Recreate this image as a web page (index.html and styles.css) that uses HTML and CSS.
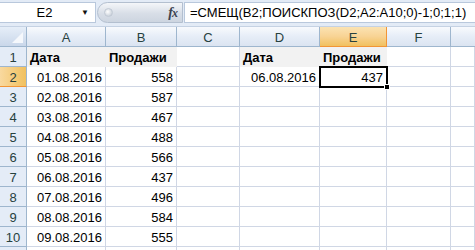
FILE: index.html
```html
<!DOCTYPE html>
<html lang="ru">
<head>
    <meta charset="UTF-8">
    <title>Книга1</title>
    <link rel="stylesheet" href="styles.css">
</head>
<body>
    <div class="formula-bar">
        <div class="name-box">
            <span class="cell-ref">E2</span>
            <span class="drop">&#9660;</span>
        </div>
        <div class="fx-box">
            <span class="knob"></span>
            <span class="fx"><i>f</i><i>x</i></span>
        </div>
        <div class="formula">=СМЕЩ(B2;ПОИСКПОЗ(D2;A2:A10;0)-1;0;1;1)</div>
    </div>

    <div class="sheet">
        <div class="corner"></div>
        <div class="col-head">A</div>
        <div class="col-head">B</div>
        <div class="col-head">C</div>
        <div class="col-head">D</div>
        <div class="col-head active">E</div>
        <div class="col-head">F</div>
        <div class="col-head last"></div>

        <div class="row-head">1</div>
        <div class="cell title">Дата</div>
        <div class="cell title">Продажи</div>
        <div class="cell"></div>
        <div class="cell title">Дата</div>
        <div class="cell title">Продажи</div>
        <div class="cell"></div>
        <div class="cell"></div>

        <div class="row-head active">2</div>
        <div class="cell num">01.08.2016</div>
        <div class="cell num">558</div>
        <div class="cell"></div>
        <div class="cell num">06.08.2016</div>
        <div class="cell num selected">437<span class="handle"></span></div>
        <div class="cell"></div>
        <div class="cell"></div>

        <div class="row-head">3</div>
        <div class="cell num">02.08.2016</div>
        <div class="cell num">587</div>
        <div class="cell"></div><div class="cell"></div><div class="cell"></div><div class="cell"></div><div class="cell"></div>

        <div class="row-head">4</div>
        <div class="cell num">03.08.2016</div>
        <div class="cell num">467</div>
        <div class="cell"></div><div class="cell"></div><div class="cell"></div><div class="cell"></div><div class="cell"></div>

        <div class="row-head">5</div>
        <div class="cell num">04.08.2016</div>
        <div class="cell num">488</div>
        <div class="cell"></div><div class="cell"></div><div class="cell"></div><div class="cell"></div><div class="cell"></div>

        <div class="row-head">6</div>
        <div class="cell num">05.08.2016</div>
        <div class="cell num">566</div>
        <div class="cell"></div><div class="cell"></div><div class="cell"></div><div class="cell"></div><div class="cell"></div>

        <div class="row-head">7</div>
        <div class="cell num">06.08.2016</div>
        <div class="cell num">437</div>
        <div class="cell"></div><div class="cell"></div><div class="cell"></div><div class="cell"></div><div class="cell"></div>

        <div class="row-head">8</div>
        <div class="cell num">07.08.2016</div>
        <div class="cell num">496</div>
        <div class="cell"></div><div class="cell"></div><div class="cell"></div><div class="cell"></div><div class="cell"></div>

        <div class="row-head">9</div>
        <div class="cell num">08.08.2016</div>
        <div class="cell num">584</div>
        <div class="cell"></div><div class="cell"></div><div class="cell"></div><div class="cell"></div><div class="cell"></div>

        <div class="row-head">10</div>
        <div class="cell num">09.08.2016</div>
        <div class="cell num">555</div>
        <div class="cell"></div><div class="cell"></div><div class="cell"></div><div class="cell"></div><div class="cell"></div>

        <div class="row-head"></div>
        <div class="cell"></div><div class="cell"></div><div class="cell"></div><div class="cell"></div><div class="cell"></div><div class="cell"></div><div class="cell"></div>
    </div>
</body>
</html>
```

FILE: styles.css
```css
* { box-sizing: border-box; }
body {
    margin: 0;
    width: 475px;
    height: 250px;
    overflow: hidden;
    background: #fff;
    font-family: 'Liberation Sans', Arial, sans-serif;
    font-size: 13px;
    color: #000;
}

/* formula bar */
.formula-bar {
    display: flex;
    align-items: stretch;
    height: 27px;
    padding: 2px 0 3px 0;
    background: #e3ebf6;
    border-bottom: 1px solid #c5d2e3;
}
.name-box {
    width: 96px;
    display: flex;
    align-items: center;
    background: #fff;
    border: 1px solid #b9c8dc;
    border-left: none;
}
.cell-ref {
    flex: 1;
    text-align: center;
    padding-left: 8px;
    font-size: 13px;
}
.drop {
    font-size: 8px;
    width: 14px;
    color: #111;
}
.fx-box {
    width: 86px;
    margin: 0 1px 0 1px;
    display: flex;
    align-items: center;
    justify-content: space-between;
    padding: 0 5px 0 6px;
    border-radius: 11px 0 0 11px;
    background: linear-gradient(#f4f6f9, #d8dee7 55%, #cdd5e0);
    border: 1px solid #b3bfcf;
}
.knob {
    width: 9px;
    height: 9px;
    border-radius: 50%;
    background: radial-gradient(circle at 40% 40%, #ffffff, #b8c2ce);
    border: 1px solid #c2cad5;
}
.fx {
    font-family: 'Liberation Serif', 'Times New Roman', serif;
    font-weight: bold;
    font-size: 14px;
    color: #3b4350;
    letter-spacing: -1px;
}
.fx i:last-child { font-size: 12px; }
.formula {
    flex: 1;
    background: #fff;
    border: 1px solid #b9c8dc;
    border-right: none;
    padding: 2px 0 0 5px;
    font-size: 13px;
    white-space: nowrap;
    overflow: hidden;
}

/* worksheet grid */
.sheet {
    display: grid;
    grid-template-columns: 27px 79px 71px 63px 80px 67px 64px 1fr;
    grid-template-rows: 20px;
    grid-auto-rows: 20px;
    height: 223px;
    overflow: hidden;
}
.corner {
    position: relative;
    background: linear-gradient(#e6eef8, #c9d7ea);
    border-right: 1px solid #9eb6ce;
    border-bottom: 1px solid #9eb6ce;
}
.corner::after {
    content: "";
    position: absolute;
    right: 3px;
    bottom: 3px;
    border-left: 11px solid transparent;
    border-bottom: 11px solid #f5f8fc;
}
.col-head {
    display: flex;
    align-items: center;
    justify-content: center;
    background: linear-gradient(#f8fafd, #e6edf7 50%, #dbe4f1);
    border-right: 1px solid #9eb6ce;
    border-bottom: 1px solid #9eb6ce;
    color: #27413e;
    font-size: 13px;
    padding-top: 1px;
}
.col-head.active {
    background: linear-gradient(#fbe3b3, #f8d394 50%, #f1c15f);
    border-right-color: #f29536;
    border-bottom-color: #f29536;
}
.col-head.last { border-right: none; }
.row-head {
    display: flex;
    align-items: center;
    justify-content: center;
    background: #e4ecf7;
    border-right: 1px solid #9eb6ce;
    border-bottom: 1px solid #9eb6ce;
    color: #27413e;
    padding-top: 1px;
}
.row-head.active {
    background: linear-gradient(90deg, #f9d99f, #f1c15f);
    border-bottom-color: #f29536;
}
.cell {
    position: relative;
    border-right: 1px solid #d0d7e5;
    border-bottom: 1px solid #d0d7e5;
    padding: 2px 3px 0 3px;
    line-height: 17px;
    white-space: nowrap;
}
.cell.title {
    font-weight: bold;
    background: #f2f2f2;
    border-right-color: #f2f2f2;
    border-bottom-color: #f2f2f2;
}
.cell.num { text-align: right; }
.cell.selected {
    outline: 2px solid #000;
    outline-offset: -1px;
    z-index: 1;
}
.handle {
    position: absolute;
    right: -4px;
    bottom: -4px;
    width: 6px;
    height: 6px;
    background: #000;
    border: 1px solid #fff;
}
```
